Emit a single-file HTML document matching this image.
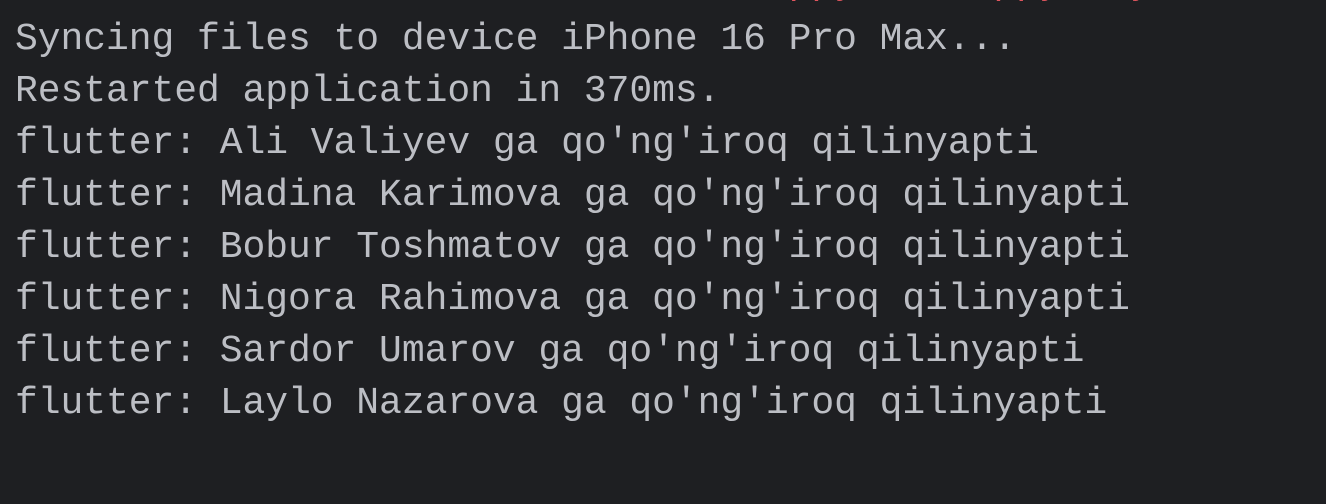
<!DOCTYPE html>
<html><head><meta charset="utf-8"><style>
html,body{margin:0;padding:0;background:#1e1f22;width:1326px;height:504px;overflow:hidden}
.c{position:absolute;left:15px;top:14px;font-family:"Liberation Mono",monospace;font-size:38px;letter-spacing:-0.05px;line-height:52px;color:#bcbec4;white-space:pre}
.r{position:absolute;left:15px;top:-42px;font-family:"Liberation Mono",monospace;font-size:38px;letter-spacing:-0.05px;line-height:52px;color:#e0555e;white-space:pre}
</style></head><body>
<div class="r">  ,      ,         ,      ,       ppy      ppy   y   ,</div>
<div class="c">Syncing files to device iPhone 16 Pro Max...
Restarted application in 370ms.
flutter: Ali Valiyev ga qo'ng'iroq qilinyapti
flutter: Madina Karimova ga qo'ng'iroq qilinyapti
flutter: Bobur Toshmatov ga qo'ng'iroq qilinyapti
flutter: Nigora Rahimova ga qo'ng'iroq qilinyapti
flutter: Sardor Umarov ga qo'ng'iroq qilinyapti
flutter: Laylo Nazarova ga qo'ng'iroq qilinyapti</div>
</body></html>
